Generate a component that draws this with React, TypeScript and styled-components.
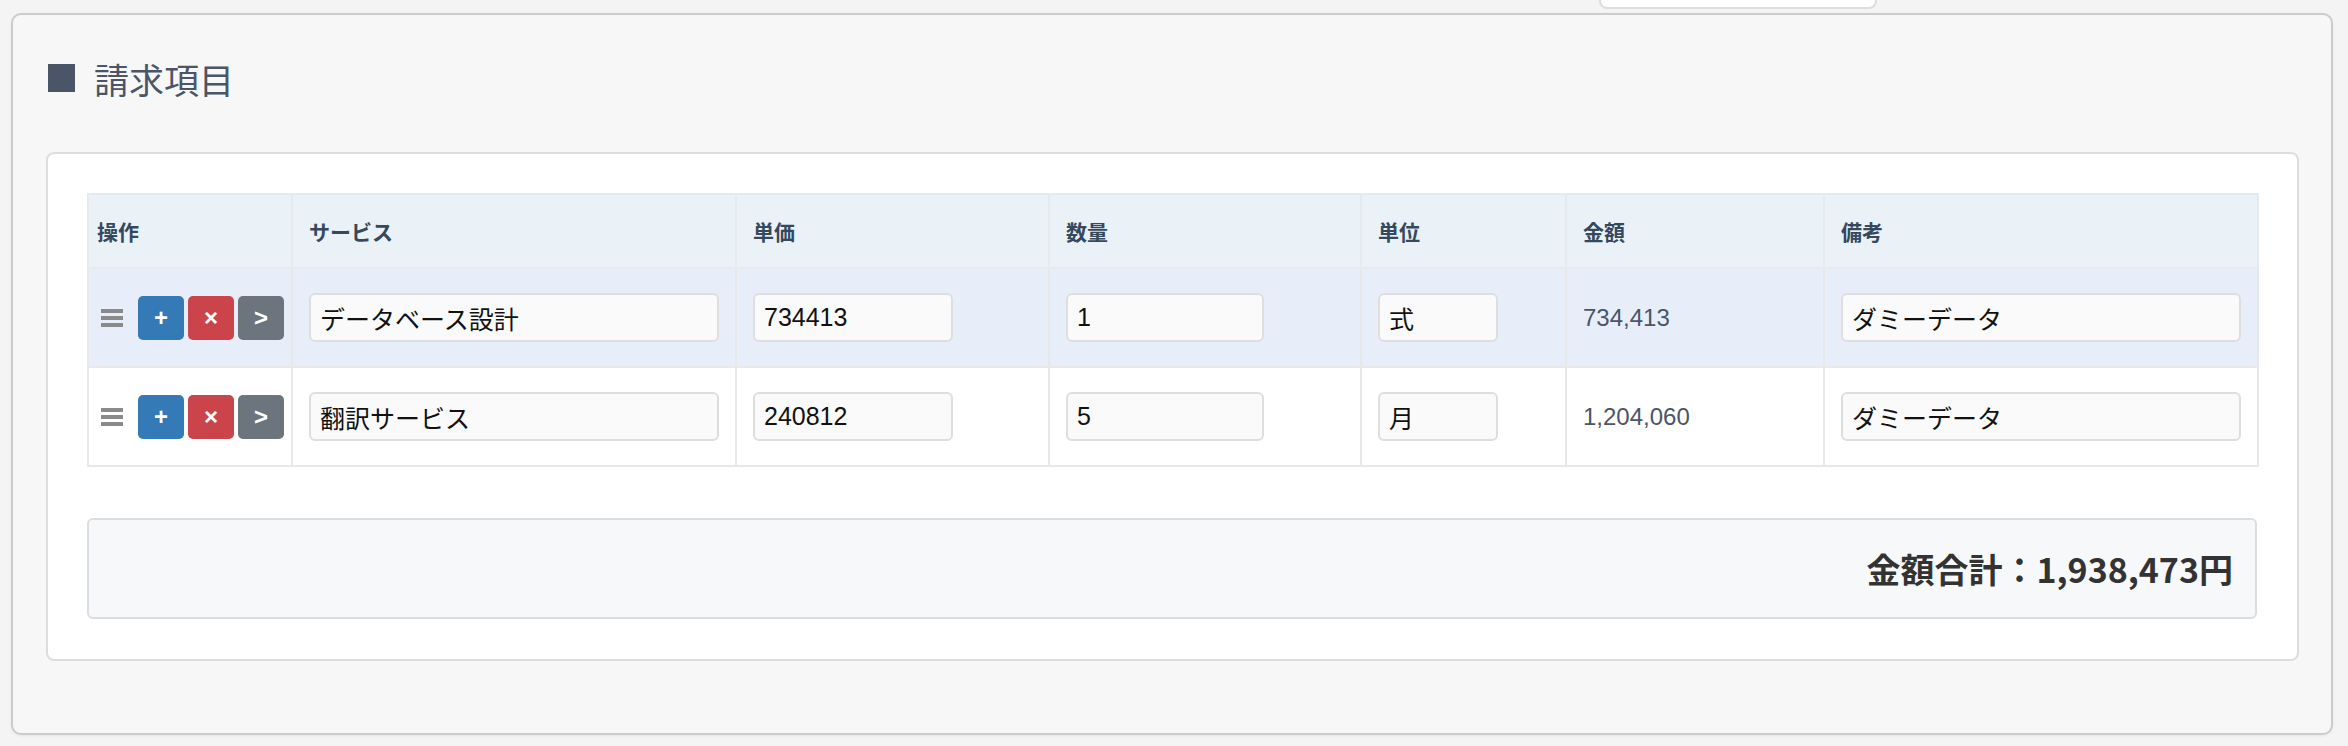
import React from 'react';
import styled, { createGlobalStyle } from 'styled-components';

const GlobalStyle = createGlobalStyle`
    body {
        margin: 0;
        background: #f4f4f4;
        font-family: "Noto Sans CJK JP", "Noto Sans", sans-serif;
    }
`;

const Page = styled.div`
    padding: 0 15px 12px 11px;
`;

const TopStub = styled.div`
    margin-left: 1588px;
    width: 274px;
    height: 7px;
    background: #fff;
    border: 2px solid #dddddd;
    border-top: none;
    border-radius: 0 0 8px 8px;
`;

const Panel = styled.section`
    margin-top: 4px;
    width: 2322px;
    box-sizing: border-box;
    background: #f7f7f7;
    border: 2px solid #cccccc;
    border-radius: 10px;
    box-shadow: 0 1px 3px rgba(0, 0, 0, 0.06);
    padding: 43px 32px 72px 33px;
`;

const Heading = styled.h2`
    display: flex;
    align-items: center;
    gap: 19px;
    margin: 0 0 54px 2px;
    height: 40px;
    font-size: 35px;
    font-weight: 400;
    color: #4a5568;
`;

const HeadingMark = styled.span`
    width: 27px;
    height: 28px;
    background: #4a5568;
`;

const Card = styled.div`
    background: #fff;
    border: 2px solid #dddddd;
    border-radius: 8px;
    padding: 39px 40px 40px 39px;
`;

const Table = styled.table`
    width: 2170px;
    border-collapse: collapse;
    table-layout: fixed;
`;

const HeadCell = styled.th<{ $first?: boolean }>`
    height: 74px;
    box-sizing: border-box;
    padding: 0 ${p => (p.$first ? '8px' : '16px')};
    text-align: left;
    font-size: 21px;
    font-weight: 700;
    color: #34495e;
    background: #eaf2f8;
    border: 2px solid #e6eaee;
`;

const Row = styled.tr<{ $active?: boolean }>`
    background: ${p => (p.$active ? '#e8eef9' : '#ffffff')};
`;

const Cell = styled.td<{ $first?: boolean }>`
    height: 99px;
    box-sizing: border-box;
    padding: ${p => (p.$first ? '0 0 0 12px' : '0 16px')};
    border: 2px solid #e8e8e8;
    vertical-align: middle;
`;

const Ops = styled.div`
    display: flex;
    align-items: center;
`;

const Handle = styled.div`
    display: flex;
    flex-direction: column;
    flex-shrink: 0;
    gap: 3px;
    width: 22px;
    margin-right: 15px;

    span {
        height: 4px;
        background: #8a8a8a;
    }
`;

const OpButton = styled.button<{ $color: string }>`
    flex-shrink: 0;
    width: 46px;
    height: 44px;
    margin-right: 4px;
    border: none;
    border-radius: 5px;
    background: ${p => p.$color};
    color: #fff;
    font-family: "Liberation Sans", sans-serif;
    font-size: 24px;
    font-weight: 700;
    line-height: 1;
    padding: 0;
`;

const Field = styled.input<{ $width?: number }>`
    box-sizing: border-box;
    width: ${p => (p.$width ? `${p.$width}px` : '100%')};
    height: 49px;
    padding: 0 9px;
    background: #fafafa;
    border: 2px solid #dedede;
    border-radius: 6px;
    font-family: "Liberation Sans", "Noto Sans CJK JP", sans-serif;
    font-size: 25px;
    color: #111;
    outline: none;
`;

const Amount = styled.span`
    font-family: "Liberation Sans", sans-serif;
    font-size: 24px;
    color: #4a5568;
`;

const TotalBox = styled.div`
    margin-top: 51px;
    height: 101px;
    box-sizing: border-box;
    display: flex;
    align-items: center;
    justify-content: flex-end;
    padding-right: 22px;
    background: #f7f8fa;
    border: 2px solid #dcdde1;
    border-radius: 6px;
    font-size: 34px;
    font-weight: 700;
    color: #333;
`;

const columns = [
    { label: '操作', width: 204 },
    { label: 'サービス', width: 444 },
    { label: '単価', width: 313 },
    { label: '数量', width: 312 },
    { label: '単位', width: 205 },
    { label: '金額', width: 258 },
    { label: '備考', width: 434 },
];

const items = [
    { service: 'データベース設計', price: 734413, qty: 1, unit: '式', note: 'ダミーデータ' },
    { service: '翻訳サービス', price: 240812, qty: 5, unit: '月', note: 'ダミーデータ' },
];

const yen = (n: number) => n.toLocaleString('en-US');

export default function App() {
    const total = items.reduce((sum, it) => sum + it.price * it.qty, 0);

    return (
        <Page>
            <GlobalStyle />
            <TopStub />
            <Panel>
                <Heading>
                    <HeadingMark />
                    請求項目
                </Heading>
                <Card>
                    <Table>
                        <colgroup>
                            {columns.map(c => (
                                <col key={c.label} style={{ width: c.width }} />
                            ))}
                        </colgroup>
                        <thead>
                            <tr>
                                {columns.map((c, i) => (
                                    <HeadCell key={c.label} $first={i === 0}>
                                        {c.label}
                                    </HeadCell>
                                ))}
                            </tr>
                        </thead>
                        <tbody>
                            {items.map((it, i) => (
                                <Row key={it.service} $active={i === 0}>
                                    <Cell $first>
                                        <Ops>
                                            <Handle>
                                                <span />
                                                <span />
                                                <span />
                                            </Handle>
                                            <OpButton $color="#337ab7">+</OpButton>
                                            <OpButton $color="#cc444b">×</OpButton>
                                            <OpButton $color="#6c757d">&gt;</OpButton>
                                        </Ops>
                                    </Cell>
                                    <Cell>
                                        <Field defaultValue={it.service} />
                                    </Cell>
                                    <Cell>
                                        <Field $width={200} defaultValue={String(it.price)} />
                                    </Cell>
                                    <Cell>
                                        <Field $width={198} defaultValue={String(it.qty)} />
                                    </Cell>
                                    <Cell>
                                        <Field $width={120} defaultValue={it.unit} />
                                    </Cell>
                                    <Cell>
                                        <Amount>{yen(it.price * it.qty)}</Amount>
                                    </Cell>
                                    <Cell>
                                        <Field defaultValue={it.note} />
                                    </Cell>
                                </Row>
                            ))}
                        </tbody>
                    </Table>
                    <TotalBox>金額合計：{yen(total)}円</TotalBox>
                </Card>
            </Panel>
        </Page>
    );
}
